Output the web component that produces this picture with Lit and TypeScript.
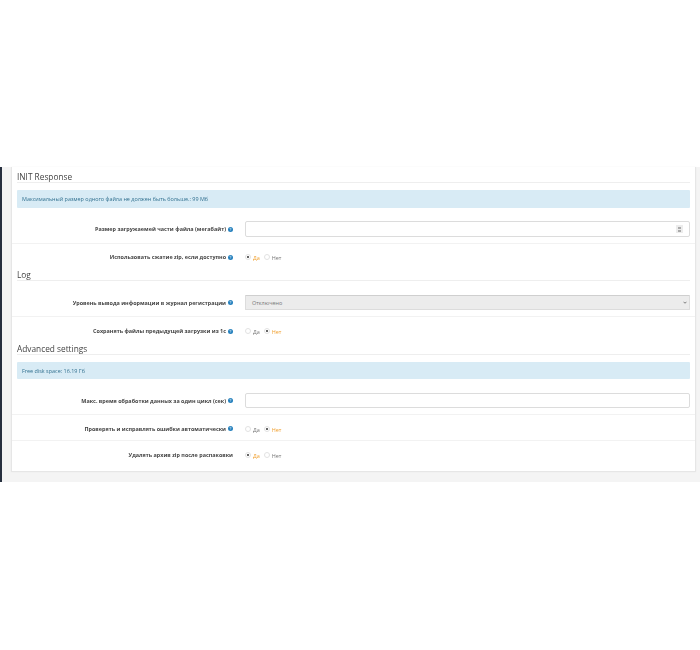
import { LitElement, html, css } from "lit";
import { customElement } from "lit/decorators.js";

const help = html`<svg class="help" viewBox="0 0 10 10" aria-hidden="true"><circle cx="5" cy="5" r="5" fill="#2580bd"></circle><path d="M3.6 3.9a1.4 1.4 0 1 1 2.2 1.1c-.5.3-.8.5-.8 1M5 7.2v.8" fill="none" stroke="#fff" stroke-width="1"></path></svg>`;

function radios(yes: boolean) {
  return html`<div class="radios">
    <span class="opt"><i class="radio ${yes ? "on" : ""}"></i><span class="${yes ? "sel" : ""}">Да</span></span>
    <span class="opt"><i class="radio ${yes ? "" : "on"}"></i><span class="${yes ? "" : "sel"}">Нет</span></span>
  </div>`;
}

@customElement("app-root")
export class AppRoot extends LitElement {
  static styles = css`
    :host { display: block; width: 700px; height: 650px; background: #fff; font-family: "Open Sans", "Noto Sans", sans-serif; color: #555; overflow: hidden; }
    .top { height: 167px; }
    .app { height: 315px; background: #f4f4f4; display: flex; }
    .side { width: 2px; background: #27303f; flex: none; }
    .main { flex: 1; padding: 0 4px 10px 9px; min-width: 0; display: flex; }
    .card { flex: 1; background: #fff; border: solid #e6e6e6; border-width: 0 1px 1px 1px; box-shadow: 0 0 2px rgba(0,0,0,.04); display: flex; flex-direction: column; filter: blur(0.3px); }
    .head { margin: 0 5px; height: 10px; display: flex; align-items: flex-end; border-bottom: 1px solid #eee; font-size: 8.3px; font-weight: 400; color: #444; line-height: 10px; }
    .head.first { height: 15px; }
    .head.short { height: 9px; line-height: 11px; }
    .alert { margin: 7px 5px 0; height: 18px; background: #d8ebf5; border-radius: 1px; font-size: 5.45px; color: #31708f; display: flex; align-items: center; padding-left: 5px; flex: none; }
    .alert.thin { height: 17px; }
    .row { display: grid; grid-template-columns: 222px 1fr; column-gap: 11px; align-items: center; padding-right: 5px; box-sizing: border-box; flex: none; }
    .ruled { border-bottom: 1px solid #f2f2f2; }
    .field { height: 36px; padding-top: 13px; padding-bottom: 6px; }
    .field.select-row { padding-top: 14px; }
    .field.low { padding-top: 13.5px; padding-bottom: 5.5px; }
    .r26 { height: 26px; }
    .r28 { height: 28px; }
    .nudge { padding-top: 2px; }
    .end { flex: 1; padding-bottom: 3px; }
    .label { display: flex; justify-content: flex-end; align-items: center; gap: 2px; padding-right: 1px; font-size: 5.45px; font-weight: 700; color: #444; white-space: nowrap; }
    .help { width: 5px; height: 5px; flex: none; }
    .input { position: relative; height: 16px; background: #fff; border: 1px solid #dcdcdc; border-radius: 2px; box-sizing: border-box; }
    .input.thin { height: 15px; }
    .spin { position: absolute; right: 6px; top: 3px; width: 7px; height: 8px; background: #ececec; display: flex; flex-direction: column; align-items: center; justify-content: center; gap: 1px; }
    .spin i { display: block; width: 3px; height: 2px; background: #aaa; }
    .select { height: 15px; background: #ececec; border: 1px solid #dcdcdc; border-top-color: #cfcfcf; border-radius: 1px; box-sizing: border-box; font-size: 5.45px; color: #777; display: flex; align-items: center; justify-content: space-between; padding: 0 2px 0 6px; }
    .select svg { width: 4px; height: 3px; }
    .radios { display: flex; gap: 4px; font-size: 5.45px; color: #777; align-items: center; }
    .opt { display: flex; align-items: center; gap: 2px; }
    .opt span { position: relative; top: 1px; }
    .radio { width: 6px; height: 6px; border-radius: 50%; border: 1px solid #e2e2e2; box-sizing: border-box; background: #fff; display: flex; align-items: center; justify-content: center; }
    .radio.on::after { content: ""; width: 2px; height: 2px; border-radius: 50%; background: #333; }
    .sel { color: #f0a030; }
  `;

  render() {
    return html`
      <div class="top"></div>
      <div class="app">
        <div class="side"></div>
        <div class="main">
          <div class="card">
            <div class="head first">INIT Response</div>
            <div class="alert">Максимальный размер одного файла не должен быть больше.: 99 Мб</div>
            <div class="row field ruled">
              <div class="label">Размер загружаемей части файла (мегабайт) ${help}</div>
              <div class="input"><span class="spin"><i></i><i></i></span></div>
            </div>
            <div class="row r26">
              <div class="label">Использовать сжатие zip, если доступно ${help}</div>
              ${radios(true)}
            </div>
            <div class="head">Log</div>
            <div class="row field select-row ruled">
              <div class="label">Уровень вывода информации в журнал регистрации ${help}</div>
              <div class="select">Отключено
                <svg viewBox="0 0 10 8"><path d="M1 2l4 4 4-4" fill="none" stroke="#555" stroke-width="2"></path></svg>
              </div>
            </div>
            <div class="row r28">
              <div class="label">Сохранять файлы предыдущей загрузки из 1с ${help}</div>
              ${radios(false)}
            </div>
            <div class="head short">Advanced settings</div>
            <div class="alert thin">Free disk space: 16.19 Гб</div>
            <div class="row field low ruled">
              <div class="label">Макс. время обработки данных за один цикл (сек) ${help}</div>
              <div class="input thin"></div>
            </div>
            <div class="row r26 nudge ruled">
              <div class="label">Проверять и исправлять ошибки автоматически ${help}</div>
              ${radios(false)}
            </div>
            <div class="row end">
              <div class="label">Удалять архив zip после распаковки</div>
              ${radios(true)}
            </div>
          </div>
        </div>
      </div>
    `;
  }
}
